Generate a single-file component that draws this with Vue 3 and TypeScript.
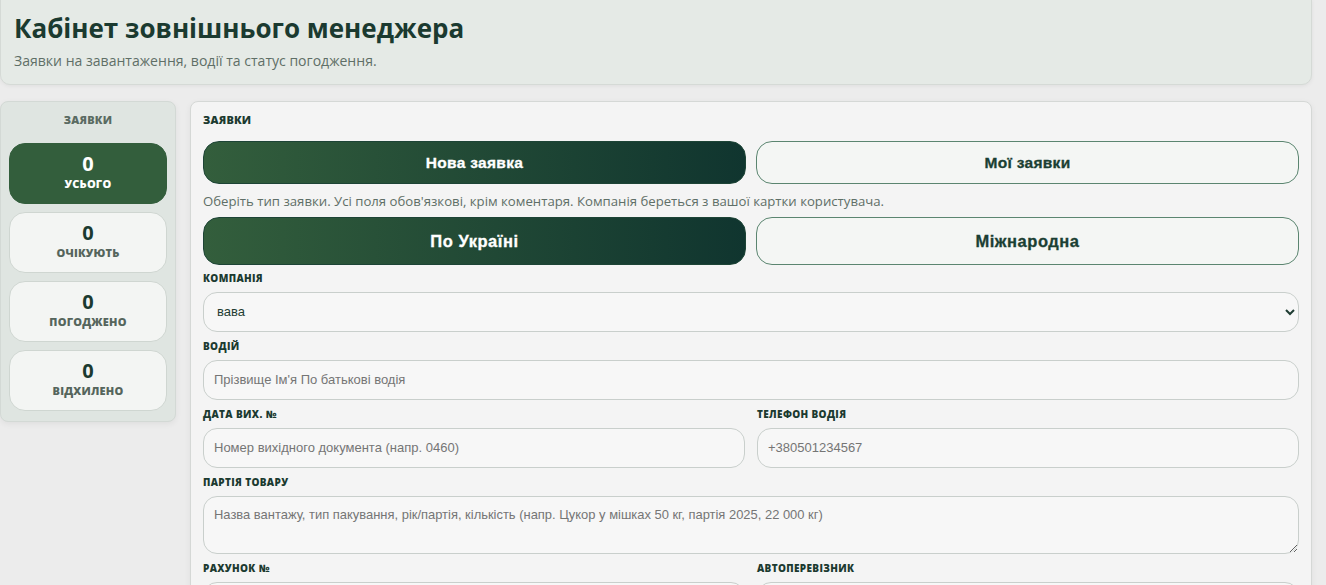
<script setup lang="ts">
const stats = [
  { label: 'Усього', value: 0, active: true },
  { label: 'Очікують', value: 0, active: false },
  { label: 'Погоджено', value: 0, active: false },
  { label: 'Відхилено', value: 0, active: false }
]
</script>

<template>
  <div class="page">
    <header class="hero">
      <h1>Кабінет зовнішнього менеджера</h1>
      <p>Заявки на завантаження, водії та статус погодження.</p>
    </header>

    <div class="layout">
      <aside class="side">
        <div class="side-title">Заявки</div>
        <div
          v-for="s in stats"
          :key="s.label"
          class="stat"
          :class="{ active: s.active }"
        >
          <div class="stat-value">{{ s.value }}</div>
          <div class="stat-label">{{ s.label }}</div>
        </div>
      </aside>

      <main class="panel">
        <div class="panel-title">Заявки</div>

        <div class="tabs">
          <button class="btn primary" type="button">Нова заявка</button>
          <button class="btn" type="button">Мої заявки</button>
        </div>
        <p class="hint">Оберіть тип заявки. Усі поля обов'язкові, крім коментаря. Компанія береться з вашої картки користувача.</p>
        <div class="tabs type">
          <button class="btn primary" type="button">По Україні</button>
          <button class="btn" type="button">Міжнародна</button>
        </div>

        <form class="form" @submit.prevent>
          <label class="field">
            <span>Компанія</span>
            <select>
              <option>вава</option>
            </select>
          </label>
          <label class="field">
            <span>Водій</span>
            <input type="text" placeholder="Прізвище Ім'я По батькові водія">
          </label>
          <div class="row">
            <label class="field">
              <span>Дата вих. №</span>
              <input type="text" placeholder="Номер вихідного документа (напр. 0460)">
            </label>
            <label class="field">
              <span>Телефон водія</span>
              <input type="text" placeholder="+380501234567">
            </label>
          </div>
          <label class="field">
            <span>Партія товару</span>
            <textarea placeholder="Назва вантажу, тип пакування, рік/партія, кількість (напр. Цукор у мішках 50 кг, партія 2025, 22 000 кг)" />
          </label>
          <div class="row">
            <label class="field">
              <span>Рахунок №</span>
              <input type="text">
            </label>
            <label class="field">
              <span>Автоперевізник</span>
              <input type="text">
            </label>
          </div>
        </form>
      </main>
    </div>
  </div>
</template>

<style>
html,
body {
  margin: 0;
  height: 585px;
  overflow: hidden;
  background: #ececec;
}
</style>

<style scoped>
.page {
  width: 1312px;
  font-family: "Open Sans", "Noto Sans", sans-serif;
  color: #1f3d33;
}

.hero {
  box-sizing: border-box;
  height: 86px;
  margin-top: -1px;
  padding: 12px 13px;
  background: #e5eae6;
  border: 1px solid #d5dad6;
  border-radius: 0 0 10px 10px;
  box-shadow: 0 1px 4px rgba(0, 0, 0, 0.06);
}

.hero h1 {
  margin: 0;
  font-size: 26px;
  line-height: 32px;
  font-weight: 700;
  color: #1b3a30;
}

.hero p {
  margin: 7px 0 0;
  font-size: 14.05px;
  line-height: 19px;
  color: #5f6f67;
}

.layout {
  display: grid;
  grid-template-columns: 176px 1fr;
  gap: 14px;
  margin-top: 16px;
  align-items: start;
}

.side {
  box-sizing: border-box;
  padding: 8px 8px 10px;
  background: #dfe5e1;
  border: 1px solid #d3d9d5;
  border-radius: 8px;
  box-shadow: 0 2px 6px rgba(0, 0, 0, 0.06);
}

.side-title {
  margin: 2px 0 16px;
  text-align: center;
  font-size: 11px;
  line-height: 15px;
  font-weight: 800;
  letter-spacing: 0.2px;
  text-transform: uppercase;
  color: #5a6b62;
}

.stat {
  box-sizing: border-box;
  height: 61px;
  margin-top: 8px;
  padding-top: 9px;
  text-align: center;
  background: #f3f5f3;
  border: 1px solid #cfd6d1;
  border-radius: 16px;
}

.stat.active {
  background: #335e3c;
  border-color: #335e3c;
  color: #fff;
}

.stat-value {
  font-size: 20px;
  line-height: 22px;
  font-weight: 700;
  color: #1b3a30;
}

.stat-label {
  margin-top: 1px;
  font-size: 11px;
  line-height: 15px;
  font-weight: 800;
  letter-spacing: 0.2px;
  text-transform: uppercase;
  color: #55655c;
}

.stat.active .stat-value,
.stat.active .stat-label {
  color: #fff;
}

.panel {
  box-sizing: border-box;
  height: 600px;
  padding: 10px 12px;
  background: #f4f4f4;
  border: 1px solid #d5d8d6;
  border-radius: 8px;
  box-shadow: 0 2px 6px rgba(0, 0, 0, 0.06);
}

.panel-title {
  font-size: 11px;
  line-height: 15px;
  font-weight: 800;
  letter-spacing: 0.2px;
  text-transform: uppercase;
  color: #1b3a30;
}

.tabs {
  display: grid;
  grid-template-columns: 1fr 1fr;
  gap: 10px;
  margin-top: 14px;
}

.btn {
  height: 43px;
  padding: 0;
  font-family: "Liberation Sans", Arial, sans-serif;
  font-size: 15.5px;
  font-weight: 700;
  letter-spacing: 0.3px;
  -webkit-text-stroke: 0.3px currentColor;
  color: #1b3f33;
  background: #f4f6f4;
  border: 1px solid #5b8570;
  border-radius: 16px;
}

.btn.primary {
  color: #fff;
  background: linear-gradient(90deg, #335e3c, #10352f);
  border-color: #1d4436;
}

.tabs.type {
  margin-top: 7px;
}

.tabs.type .btn {
  height: 48px;
  font-size: 16.5px;
  letter-spacing: 0.55px;
}

.hint {
  margin: 9px 0 0;
  font-size: 13.18px;
  line-height: 17px;
  color: #5f6f67;
}

.form {
  display: flex;
  flex-direction: column;
  gap: 7px;
  margin-top: 6px;
}

.row {
  display: grid;
  grid-template-columns: 1fr 1fr;
  gap: 12px;
}

.field {
  display: flex;
  flex-direction: column;
  gap: 7px;
  min-width: 0;
}

.field span {
  font-size: 10px;
  line-height: 14px;
  font-weight: 800;
  letter-spacing: 0.35px;
  text-transform: uppercase;
  color: #1b3a30;
}

.field input,
.field select,
.field textarea {
  box-sizing: border-box;
  width: 100%;
  height: 40px;
  padding: 0 10px 2px;
  font-family: "Liberation Sans", Arial, sans-serif;
  font-size: 13px;
  color: #1f3d33;
  background: #f7f7f7;
  border: 1px solid #c9cfcc;
  border-radius: 14px;
  outline: none;
}

.field select {
  padding: 0 9px 2px;
}

.field textarea {
  height: 58px;
  padding: 10px;
  resize: vertical;
  display: block;
  font-size: 12.95px;
}

.field input::placeholder,
.field textarea::placeholder {
  color: #757575;
  opacity: 1;
}
</style>
